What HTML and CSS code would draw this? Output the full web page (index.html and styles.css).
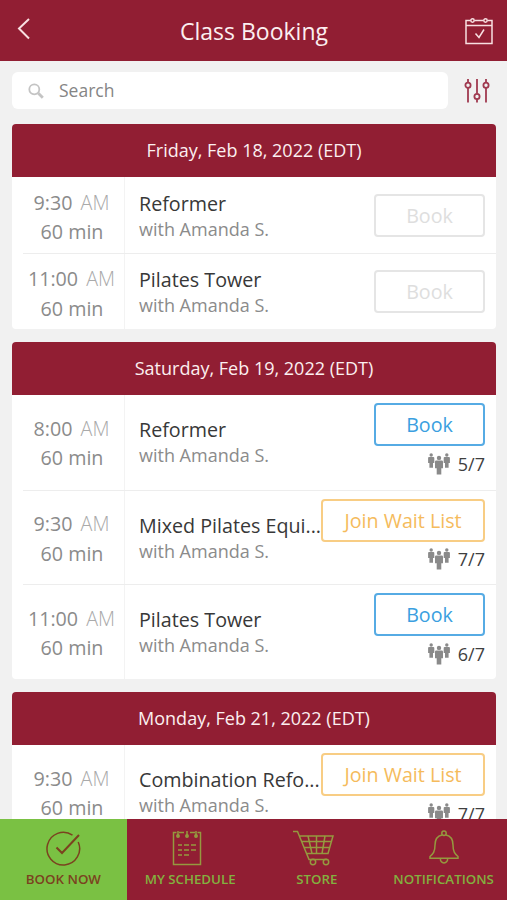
FILE: index.html
```html
<!DOCTYPE html>
<html lang="en">
  <head>
    <meta charset="UTF-8" />
    <meta name="viewport" content="width=device-width, initial-scale=1.0" />
    <title>Class Booking</title>
    <link rel="stylesheet" href="styles.css">
  </head>
  <body>
    <!-- Shared icons -->
    <svg class="sprite" width="0" height="0">
      <symbol id="people" viewBox="0 0 22 22">
        <circle cx="3.2" cy="2" r="1.7" />
        <path d="M1 4h4.400q.9 0 .9.9v5H5v4.800H1.400V9.900H.1v-5q0-.9.9-.9z" />
        <circle cx="18.8" cy="2" r="1.7" />
        <path d="M16.600 4H21q.9 0 .9.9v5h-1.300v4.800H17V9.900h-1.300v-5q0-.9.9-.9z" />
        <circle cx="11" cy="4.900" r="2.200" />
        <path d="M8.200 7.500h5.600q1.200 0 1.200 1.200v6.500h-1.700v6.300H8.700v-6.300H7V8.700q0-1.200 1.200-1.200z" />
      </symbol>
    </svg>

    <div class="app">
      <header class="topbar">
        <svg class="back" viewBox="0 0 14 22"><path d="M12 1 2 10.500 12 20.500" /></svg>
        <h1>Class Booking</h1>
        <svg class="calendar" viewBox="0 0 28 28">
          <path d="M5.500 3.500H1v23h26v-23h-4.500M9.500 3.500h9M1 8.500h26M10.500 16.500l3.500 4 5-8" />
          <circle cx="7.500" cy="3.500" r="1.700" /><circle cx="20.500" cy="3.500" r="1.700" />
        </svg>
      </header>

      <div class="searchbar">
        <div class="search">
          <svg class="magnifier" viewBox="0 0 16 16"><circle cx="6.300" cy="6.300" r="5" /><path class="handle" d="m10.300 10.300 4.500 4.500" /></svg>
          <span>Search</span>
        </div>
        <svg class="filters" viewBox="0 0 26 26">
          <path d="M4 1v3.500M4 10v14.500M13 1v14.500M13 21v3.500M22 1v3.500M22 10v14.500" />
          <circle cx="4" cy="7.200" r="2.600" /><circle cx="13" cy="18.500" r="2.600" /><circle cx="22" cy="7.200" r="2.600" />
        </svg>
      </div>

      <main class="schedule">
        <section class="day">
          <h2>Friday, Feb 18, 2022 (EDT)</h2>
          <div class="row">
            <div class="time"><p>9:30 <span>AM</span></p><p>60 min</p></div>
            <div class="details">
              <div class="info"><h3>Reformer</h3><p>with Amanda S.</p></div>
              <div class="action"><button class="btn disabled">Book</button></div>
            </div>
          </div>
          <div class="row">
            <div class="time"><p>11:00 <span>AM</span></p><p>60 min</p></div>
            <div class="details">
              <div class="info"><h3>Pilates Tower</h3><p>with Amanda S.</p></div>
              <div class="action"><button class="btn disabled">Book</button></div>
            </div>
          </div>
        </section>

        <section class="day open">
          <h2>Saturday, Feb 19, 2022 (EDT)</h2>
          <div class="row">
            <div class="time"><p>8:00 <span>AM</span></p><p>60 min</p></div>
            <div class="details">
              <div class="info"><h3>Reformer</h3><p>with Amanda S.</p></div>
              <div class="action">
                <button class="btn">Book</button>
                <div class="spots"><svg><use href="#people" /></svg>5/7</div>
              </div>
            </div>
          </div>
          <div class="row">
            <div class="time"><p>9:30 <span>AM</span></p><p>60 min</p></div>
            <div class="details">
              <div class="info"><h3>Mixed Pilates Equi...</h3><p>with Amanda S.</p></div>
              <div class="action">
                <button class="btn wait">Join Wait List</button>
                <div class="spots"><svg><use href="#people" /></svg>7/7</div>
              </div>
            </div>
          </div>
          <div class="row">
            <div class="time"><p>11:00 <span>AM</span></p><p>60 min</p></div>
            <div class="details">
              <div class="info"><h3>Pilates Tower</h3><p>with Amanda S.</p></div>
              <div class="action">
                <button class="btn">Book</button>
                <div class="spots"><svg><use href="#people" /></svg>6/7</div>
              </div>
            </div>
          </div>
        </section>

        <section class="day open">
          <h2>Monday, Feb 21, 2022 (EDT)</h2>
          <div class="row">
            <div class="time"><p>9:30 <span>AM</span></p><p>60 min</p></div>
            <div class="details">
              <div class="info"><h3>Combination Refo...</h3><p>with Amanda S.</p></div>
              <div class="action">
                <button class="btn wait">Join Wait List</button>
                <div class="spots"><svg><use href="#people" /></svg>7/7</div>
              </div>
            </div>
          </div>
        </section>
      </main>

      <nav class="tabs">
        <a class="tab active">
          <svg viewBox="0 0 36 36"><path d="M27.500 5.200A16.300 16.300 0 1 0 33.200 12" /><path class="thick" d="m11.500 17.500 5.500 5.500L34 5" /></svg>
          <span>BOOK NOW</span>
        </a>
        <a class="tab shift">
          <svg viewBox="0 0 36 36">
            <path d="M7.500 2.500h-3v32h27v-32h-3M10 2.500h5M21 2.500h5M9 1v6M18 1v6M27 1v6" />
            <path d="M9 15h4m2 0h5m2 0h5M9 20h4m2 0h5m2 0h5M9 25h4m2 0h5" />
            <circle class="dot" cx="9" cy="6" r="1.200" /><circle class="dot" cx="18" cy="6" r="1.200" /><circle class="dot" cx="27" cy="6" r="1.200" />
          </svg>
          <span>MY SCHEDULE</span>
        </a>
        <a class="tab shift">
          <svg class="cart" viewBox="0 0 42 36">
            <path d="M1 1.500h4.500L17 29.500h18M7.500 6H41l-5 17.500H14.500M9.500 11.500h30M12 17.500h25.800M16 6l4 17.500M24.500 6v17.500M33 6l-3 17.500" />
            <circle cx="21" cy="32" r="2.700" /><circle cx="34" cy="32" r="2.700" />
          </svg>
          <span>STORE</span>
        </a>
        <a class="tab">
          <svg viewBox="0 0 36 36">
            <circle cx="18" cy="3.200" r="2.200" />
            <path d="M16 5C11 6 9 10 9 15c0 7-2 9-5 11.500v1.800h28v-1.800C29 24 27 22 27 15c0-5-2-9-7-10M14.500 28.500a3.600 3.600 0 1 0 7 0" />
          </svg>
          <span>NOTIFICATIONS</span>
        </a>
      </nav>
    </div>
  </body>
</html>
```

FILE: styles.css
```css
* {
  margin: 0;
  padding: 0;
  box-sizing: border-box;
}

body {
  font-family: "Open Sans", sans-serif;
  background: #f1f1f1;
  overflow: hidden;
}

svg {
  display: block;
  flex: none;
  fill: none;
  stroke-width: 1.5;
}

.sprite {
  position: absolute;
}

.app {
  display: flex;
  flex-direction: column;
  height: 900px;
}

.topbar {
  display: flex;
  align-items: center;
  justify-content: space-between;
  flex: none;
  height: 61px;
  padding: 0 14px 0 17px;
  background: #911e33;
  color: #fceff0;
}

.topbar svg {
  stroke: #f8dfe1;
}

.topbar h1 {
  padding-top: 1px;
  padding-left: 12px;
  font-size: 23px;
  font-weight: 400;
}

.back {
  width: 14px;
  height: 22px;
  margin-bottom: 4px;
  stroke-width: 2;
}

.calendar {
  width: 28px;
  height: 28px;
}

.searchbar {
  display: flex;
  align-items: center;
  flex: none;
  gap: 16px;
  padding: 11px 16px 15px 12px;
}

.search {
  display: flex;
  align-items: center;
  gap: 15px;
  width: 436px;
  height: 37px;
  padding-left: 16px;
  border-radius: 6px;
  background: #fff;
  color: #858585;
  font-size: 17.5px;
}

.search span {
  padding-bottom: 1px;
}

.magnifier {
  width: 16px;
  height: 16px;
  stroke: #c4c4c4;
  stroke-width: 1.8;
}

.magnifier .handle {
  stroke-width: 2.8;
}

.filters {
  width: 26px;
  height: 26px;
  stroke: #a03a50;
  stroke-width: 1.8;
}

.schedule {
  display: flex;
  flex-direction: column;
  flex: 1;
  gap: 13px;
  min-height: 0;
  padding: 0 11px 0 12px;
  overflow: hidden;
}

.day {
  flex: none;
  border-radius: 4px;
  background: #fff;
  overflow: hidden;
}

.day h2 {
  height: 53px;
  background: #911e33;
  color: #fceff0;
  font-size: 18px;
  font-weight: 400;
  line-height: 53px;
  text-align: center;
}

.row {
  display: flex;
  height: 76px;
  margin-left: 11px;
}

.open .row {
  height: 94.7px;
}

.row + .row {
  border-top: 1px solid #ededed;
}

.time {
  display: flex;
  flex-direction: column;
  justify-content: center;
  width: 102px;
  padding-top: 4px;
  padding-right: 3px;
  border-right: 1px solid #f3f3f3;
  color: #8b8b8b;
  font-size: 19.7px;
  line-height: 29.5px;
  text-align: center;
  white-space: nowrap;
}

.open .time {
  padding-top: 2px;
}

.time p:first-child {
  padding-right: 1px;
}

.time span {
  margin-left: 3px;
  color: #aaa;
  font-weight: 300;
}

.details {
  display: flex;
  flex: 1;
  min-width: 0;
  align-items: center;
  padding: 0 11px 0 14px;
}

.info {
  flex: 1;
  min-width: 0;
  padding-top: 2px;
  white-space: nowrap;
}

.open .info {
  padding-top: 1px;
}

.info h3 {
  color: #383838;
  font-size: 19.7px;
  font-weight: 400;
  line-height: 26px;
}

.info p {
  color: #8b8b8b;
  font-size: 18px;
  line-height: 25px;
}

.action {
  display: flex;
  flex-direction: column;
  align-items: flex-end;
}

.btn {
  width: 111px;
  height: 43px;
  border: 2px solid #56abe4;
  border-radius: 4px;
  background: #fff;
  color: #3b9fe0;
  font-family: inherit;
  font-size: 19.7px;
}

.btn.disabled {
  border-color: #e5e5e5;
  color: #dedede;
}

.btn.wait {
  width: 164px;
  border-color: #f8cd84;
  color: #f5bb5c;
}

.spots {
  display: flex;
  align-items: center;
  gap: 8px;
  height: 35px;
  color: #3f3f3f;
  font-size: 18px;
}

.spots svg {
  width: 22px;
  height: 22px;
  fill: #8a8a8a;
}

.tabs {
  display: flex;
  flex: none;
  height: 81px;
  background: #911e33;
}

.tab {
  display: flex;
  flex: 1;
  flex-direction: column;
  align-items: center;
  gap: 4px;
  padding-top: 11px;
  color: #83b03f;
  font-size: 13.3px;
  font-weight: 600;
  line-height: 18px;
}

.tab svg {
  width: 36px;
  height: 36px;
  stroke: #95993f;
}

.tab .cart {
  width: 42px;
}

.tab.shift svg {
  margin-right: 7px;
}

.tab .dot {
  fill: #95993f;
}

.tab.active {
  background: #7ac143;
  color: #7b421f;
}

.tab.active svg {
  stroke: #7b421f;
}

.tab .thick {
  stroke-width: 2;
}
```
